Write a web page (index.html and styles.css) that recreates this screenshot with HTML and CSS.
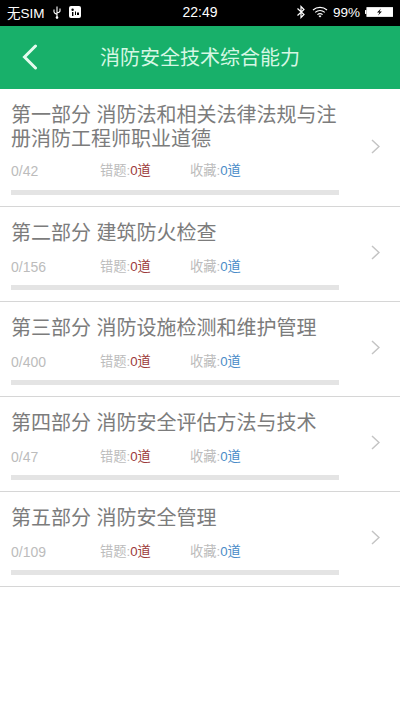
FILE: index.html
```html
<!DOCTYPE html>
<html lang="zh">
<head>
<meta charset="utf-8">
<title>消防安全技术综合能力</title>
<link rel="stylesheet" href="styles.css">
</head>
<body>
<div class="status">
  <div class="status-side">
    <span>无SIM</span>
    <svg class="usb" width="8" height="13" viewBox="0 0 8 13"><path d="M4 0.5V12.5M1 3.5V6C1 7 2 7.5 4 8.5M7 2.5V5C7 6 6 6.5 4 7" fill="none" stroke="#fff" stroke-width="1.1"/><circle cx="4" cy="11.5" r="1.3" fill="#fff"/></svg>
    <svg class="badge" width="12" height="12" viewBox="0 0 12 12"><rect width="12" height="12" rx="2" fill="#fff"/><circle cx="3.6" cy="3.8" r="1.2" fill="#000"/><path d="M3 6H4.4V10H3ZM6 5.5H7V9H6ZM8 6.5H10V9H8Z" fill="#000"/></svg>
  </div>
  <div class="status-time">22:49</div>
  <div class="status-side status-right">
    <svg class="bt" width="8" height="14" viewBox="0 0 8 14"><path d="M0.5 3.5L7 9.5L4 12.5V1.5L7 4.5L0.5 10.5" fill="none" stroke="#fff" stroke-width="1.2"/></svg>
    <svg class="wifi" width="16" height="12" viewBox="0 0 16 12"><path d="M1 4C5 0.5 11 0.5 15 4M3.2 6.4C6 4 10 4 12.8 6.4M5.4 8.6C7 7.3 9 7.3 10.6 8.6" fill="none" stroke="#fff" stroke-width="1.2"/><path d="M8 11.5L6.5 10C7.4 9.4 8.6 9.4 9.5 10Z" fill="#fff"/></svg>
    <span>99%</span>
    <svg width="28" height="10" viewBox="0 0 29 10"><rect x="0" y="3" width="1.5" height="4" fill="#fff"/><rect x="2" y="0.5" width="26.5" height="9" fill="#fff" stroke="#fff"/><path d="M16.5 1.5L12.5 5.5H15L13.5 8.5L17.5 4.5H15Z" fill="#000"/></svg>
  </div>
</div>
<header class="nav">
  <svg class="back" width="16" height="26" viewBox="0 0 16 26"><path d="M13.5 2L2.5 13L13.5 24" fill="none" stroke="#e4fbee" stroke-width="3" stroke-linecap="round"/></svg>
  <h1 class="nav-title">消防安全技术综合能力</h1>
</header>
<main class="list">
  <section class="row row-tall">
    <div class="row-body">
      <h2 class="row-title">第一部分 消防法和相关法律法规与注册消防工程师职业道德</h2>
      <div class="meta"><span class="count">0/42</span><span class="wrong">错题:<b>0道</b></span><span class="fav">收藏:<b>0道</b></span></div>
      <div class="bar"></div>
    </div>
    <svg class="chev" width="9" height="15" viewBox="0 0 9 15"><path d="M1 1L8 7.5L1 14" fill="none" stroke="#c4c4c4" stroke-width="1.5"/></svg>
  </section>
  <section class="row">
    <div class="row-body">
      <h2 class="row-title">第二部分 建筑防火检查</h2>
      <div class="meta"><span class="count">0/156</span><span class="wrong">错题:<b>0道</b></span><span class="fav">收藏:<b>0道</b></span></div>
      <div class="bar"></div>
    </div>
    <svg class="chev" width="9" height="15" viewBox="0 0 9 15"><path d="M1 1L8 7.5L1 14" fill="none" stroke="#c4c4c4" stroke-width="1.5"/></svg>
  </section>
  <section class="row">
    <div class="row-body">
      <h2 class="row-title">第三部分 消防设施检测和维护管理</h2>
      <div class="meta"><span class="count">0/400</span><span class="wrong">错题:<b>0道</b></span><span class="fav">收藏:<b>0道</b></span></div>
      <div class="bar"></div>
    </div>
    <svg class="chev" width="9" height="15" viewBox="0 0 9 15"><path d="M1 1L8 7.5L1 14" fill="none" stroke="#c4c4c4" stroke-width="1.5"/></svg>
  </section>
  <section class="row">
    <div class="row-body">
      <h2 class="row-title">第四部分 消防安全评估方法与技术</h2>
      <div class="meta"><span class="count">0/47</span><span class="wrong">错题:<b>0道</b></span><span class="fav">收藏:<b>0道</b></span></div>
      <div class="bar"></div>
    </div>
    <svg class="chev" width="9" height="15" viewBox="0 0 9 15"><path d="M1 1L8 7.5L1 14" fill="none" stroke="#c4c4c4" stroke-width="1.5"/></svg>
  </section>
  <section class="row">
    <div class="row-body">
      <h2 class="row-title">第五部分 消防安全管理</h2>
      <div class="meta"><span class="count">0/109</span><span class="wrong">错题:<b>0道</b></span><span class="fav">收藏:<b>0道</b></span></div>
      <div class="bar"></div>
    </div>
    <svg class="chev" width="9" height="15" viewBox="0 0 9 15"><path d="M1 1L8 7.5L1 14" fill="none" stroke="#c4c4c4" stroke-width="1.5"/></svg>
  </section>
</main>
</body>
</html>
```
FILE: styles.css
```css
* { box-sizing: border-box; }
html, body { margin: 0; padding: 0; }
body {
  width: 400px;
  height: 711px;
  overflow: hidden;
  background: #fff;
  font-family: "Noto Sans CJK SC", "Liberation Sans", sans-serif;
}
.status {
  height: 26px;
  padding: 0 7px 2px 7px;
  background: #000;
  color: #fff;
  display: grid;
  grid-template-columns: 1fr auto 1fr;
  align-items: center;
  font-family: "Liberation Sans", "Noto Sans CJK SC", sans-serif;
  font-size: 13.5px;
}
.status-side { display: flex; align-items: center; gap: 8px; }
.status-right { justify-content: flex-end; gap: 5px; }
.bt { margin-right: 2px; }
.status-time { font-size: 14px; }
.nav {
  height: 63px;
  background: #18b06a;
  display: flex;
  align-items: center;
  justify-content: center;
  position: relative;
}
.back { position: absolute; left: 22px; top: 18px; }
.nav-title { margin: 0 0 2px; font-size: 20px; font-weight: 400; color: #d6f7e4; }
.list { display: flex; flex-direction: column; }
.row {
  height: 95px;
  border-bottom: 1px solid #d6d6d6;
  display: flex;
  align-items: flex-start;
  padding: 13px 20px 0 11px;
}
.row-tall { height: 118px; }
.row-body { flex: 1; min-width: 0; width: 328px; }
.row-title {
  margin: 0;
  font-size: 20px;
  line-height: 24px;
  font-weight: 400;
  color: #7c7c7c;
  word-spacing: 1px;
}
.meta {
  display: flex;
  margin-top: 14px;
  font-family: "Liberation Sans", "Noto Sans CJK SC", sans-serif;
  font-size: 13.25px;
  line-height: 18px;
  color: #bcbcbc;
}
.row-tall .meta { margin-top: 12px; }
.count { width: 89px; font-size: 14px; }
.wrong { width: 90px; }
.wrong b { font-weight: 400; color: #9c3a3a; }
.fav b { font-weight: 400; color: #4a8cc8; }
.bar { height: 5px; background: #e4e4e4; margin-top: 9px; width: 328px; }
.row-tall .bar { margin-top: 10px; }
.chev { flex: none; margin-left: 32px; margin-top: 25px; }
.row-tall .chev { margin-top: 37px; }
```
